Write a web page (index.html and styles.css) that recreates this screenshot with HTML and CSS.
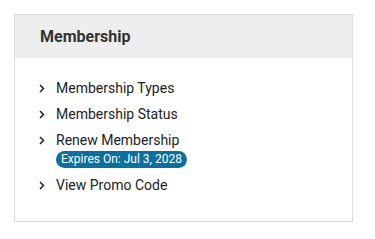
FILE: index.html
```html
<!DOCTYPE html>
<html lang="en">
<head>
  <meta charset="UTF-8" />
  <meta name="viewport" content="width=device-width, initial-scale=1.0"/>
  <title>Membership</title>
  <link rel="stylesheet" href="styles.css">
</head>
<body>
  <div class="card">
    <div class="card-header">Membership</div>
    <ul class="links">
      <li><span class="chev"><svg width="6" height="9" viewBox="0 0 6 9"><path d="M1 1l3.5 3.5L1 8" fill="none" stroke="#222" stroke-width="1.5"/></svg></span><a href="#">Membership Types</a></li>
      <li><span class="chev"><svg width="6" height="9" viewBox="0 0 6 9"><path d="M1 1l3.5 3.5L1 8" fill="none" stroke="#222" stroke-width="1.5"/></svg></span><a href="#">Membership Status</a></li>
      <li><span class="chev"><svg width="6" height="9" viewBox="0 0 6 9"><path d="M1 1l3.5 3.5L1 8" fill="none" stroke="#222" stroke-width="1.5"/></svg></span>
        <div class="stack">
          <a href="#">Renew Membership</a>
          <span class="badge">Expires On: Jul 3, 2028</span>
        </div>
      </li>
      <li><span class="chev"><svg width="6" height="9" viewBox="0 0 6 9"><path d="M1 1l3.5 3.5L1 8" fill="none" stroke="#222" stroke-width="1.5"/></svg></span><a href="#">View Promo Code</a></li>
    </ul>
  </div>
</body>
</html>
```

FILE: styles.css
```css
body {
  margin: 0;
  padding: 14px;
  background: #fff;
  font-family: Roboto, 'Liberation Sans', sans-serif;
  color: #222;
}
.card {
  border: 1px solid #ddd;
  width: 337px;
  height: 206px;
}
.card-header {
  background: #eee;
  height: 43px;
  line-height: 43px;
  padding-left: 25px;
  font-size: 16px;
  font-weight: bold;
  color: #333;
}
.links {
  list-style: none;
  margin: 0;
  padding: 21px 0 0 24px;
}
.links li {
  display: flex;
  align-items: flex-start;
  font-size: 14px;
  line-height: 18px;
  margin-bottom: 8px;
}
.chev {
  width: 17px;
  height: 18px;
  display: flex;
  align-items: center;
}
.stack {
  display: flex;
  flex-direction: column;
  align-items: flex-start;
}
.links a {
  color: #222;
  text-decoration: none;
}
.badge {
  margin-top: 2px;
  background: #0b6fa1;
  color: #fff;
  font-size: 12px;
  line-height: 17px;
  padding: 0 5px;
  border-radius: 9px;
}
```
